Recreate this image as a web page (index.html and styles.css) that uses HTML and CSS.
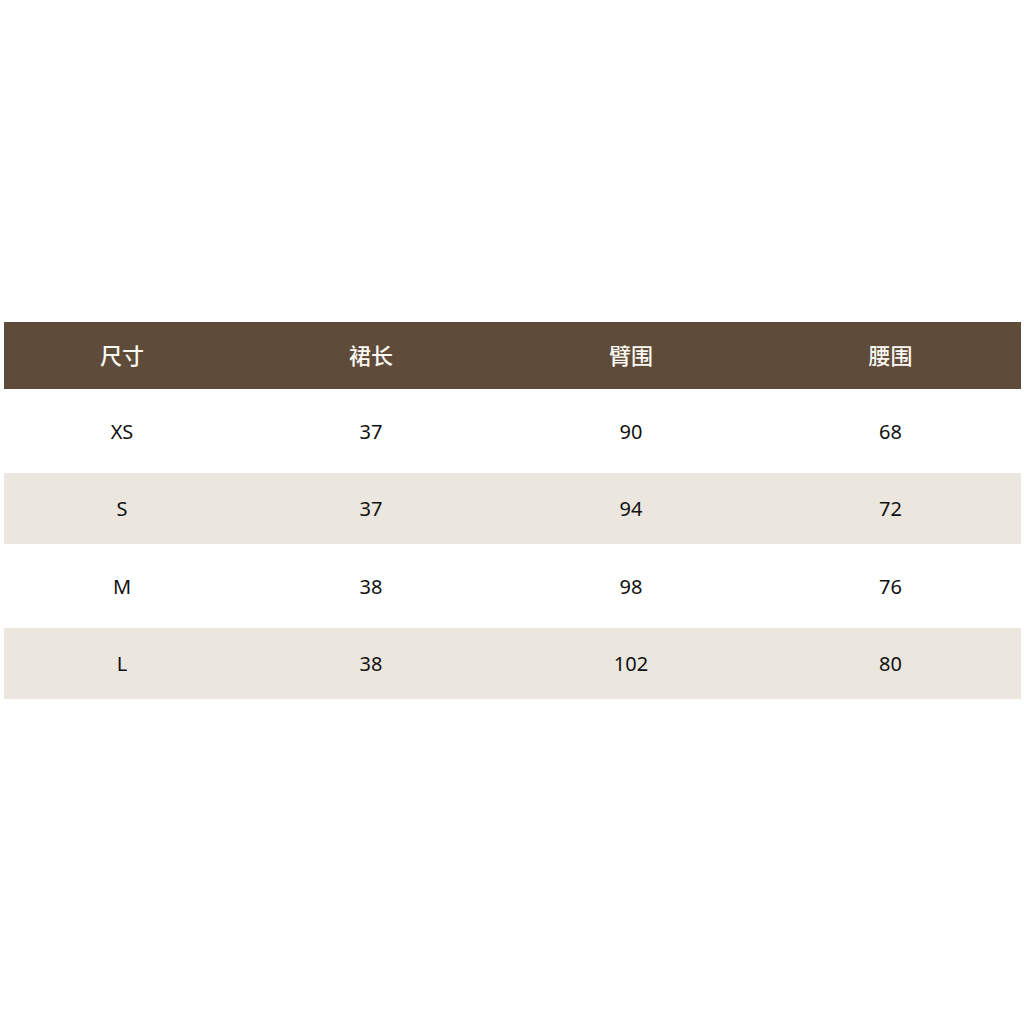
FILE: index.html
```html
<!DOCTYPE html>
<html lang="zh">
<head>
<meta charset="utf-8">
<link rel="stylesheet" href="styles.css">
</head>
<body>
<div class="page">
  <div class="table">
    <div class="row head"><div>尺寸</div><div>裙长</div><div>臂围</div><div>腰围</div></div>
    <div class="row white"><div>XS</div><div>37</div><div>90</div><div>68</div></div>
    <div class="row beige"><div>S</div><div>37</div><div>94</div><div>72</div></div>
    <div class="row white"><div>M</div><div>38</div><div>98</div><div>76</div></div>
    <div class="row beige"><div>L</div><div>38</div><div>102</div><div>80</div></div>
  </div>
</div>
</body>
</html>
```
FILE: styles.css
```css
html, body { margin: 0; padding: 0; background: #fff; }
.page {
  width: 1024px;
  height: 1024px;
  padding-top: 322px;
  padding-left: 4px;
  box-sizing: border-box;
  font-family: "Noto Sans", "Noto Sans CJK SC", sans-serif;
}
.table { width: 1017px; }
.row {
  display: grid;
  grid-template-columns: 236px 262px 258px 261px;
  align-items: center;
  font-size: 20px;
  color: #111;
}
.row > div { text-align: center; }
.head {
  height: 67px;
  padding-bottom: 4px;
  box-sizing: border-box;
  background: #5e4b39;
  color: #fbf8f2;
  font-family: "Noto Sans CJK SC", sans-serif;
  font-weight: 500;
  font-size: 22px;
}
.white { height: 84px; background: #fff; }
.beige { height: 71px; background: #ebe6de; }
```
